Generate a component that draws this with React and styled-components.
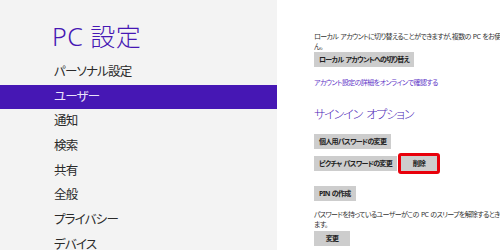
import React from "react";
import styled, { createGlobalStyle } from "styled-components";

const navItems = [
  "パーソナル設定",
  "ユーザー",
  "通知",
  "検索",
  "共有",
  "全般",
  "プライバシー",
  "デバイス",
];

const App = () => {
  return (
    <>
      <GlobalStyle />
      <Window>
        <Sidebar>
          <Title>PC 設定</Title>
          <Nav>
            {navItems.map((item, index) => (
              <NavItem key={index} active={index === 1}>
                {item}
              </NavItem>
            ))}
          </Nav>
        </Sidebar>

        <Content>
          <Para>
            ローカル アカウントに切り替えることができますが、複数の PC をお使いの場合は設定が同期されませ
            <br />
            ん。
          </Para>
          <Button>ローカル アカウントへの切り替え</Button>
          <Link href="#">アカウント設定の詳細をオンラインで確認する</Link>

          <Heading>サインイン オプション</Heading>
          <Button gap={11}>個人用パスワードの変更</Button>
          <Row>
            <Button gap={0}>ピクチャ パスワードの変更</Button>
            <Marked>
              <Button gap={0} wide>削除</Button>
            </Marked>
          </Row>
          <Button gap={12}>PIN の作成</Button>

          <Para gap={9}>
            パスワードを持っているユーザーがこの PC のスリープを解除するときは、パスワードの入力が必要になり
            <br />
            ます。
          </Para>
          <Button gap={2} wide>変更</Button>
        </Content>
      </Window>
    </>
  );
};

export default App;

const GlobalStyle = createGlobalStyle`
  html, body {
    margin: 0;
    padding: 0;
    background: #fff;
  }
  body {
    font-family: "Noto Sans", "Noto Sans CJK JP", sans-serif;
    font-feature-settings: "palt";
  }
`;

const Window = styled.div`
  display: flex;
  width: 500px;
  height: 250px;
  overflow: hidden;
`;

const Sidebar = styled.div`
  width: 277px;
  flex-shrink: 0;
  background: #f3f3f3;
  padding-top: 20px;
  box-sizing: border-box;
`;

const Title = styled.h1`
  margin: 0 0 0 52px;
  height: 40px;
  font-family: "Noto Sans", "Noto Sans CJK JP", sans-serif;
  font-weight: 300;
  font-size: 25px;
  line-height: 32px;
  color: #4617b4;
  letter-spacing: 0.5px;
`;

const Nav = styled.ul`
  list-style: none;
  margin: 0;
  padding: 0;
`;

const NavItem = styled.li`
  height: 24.7px;
  line-height: 24.7px;
  padding-left: 54px;
  font-size: 12.5px;
  letter-spacing: -0.8px;
  color: ${({ active }) => (active ? "#ebe4fa" : "#2a2a2a")};
  background: ${({ active }) => (active ? "#4617b4" : "transparent")};
  white-space: nowrap;
`;

const Content = styled.div`
  flex: 1;
  min-width: 0;
  overflow: hidden;
  padding: 32px 0 0 37px;
  display: flex;
  flex-direction: column;
  align-items: flex-start;
`;

const Para = styled.p`
  margin: ${({ gap }) => gap || 0}px 0 0;
  font-size: 7px;
  letter-spacing: -0.65px;
  word-spacing: 1px;
  line-height: 9.5px;
  color: #333;
  white-space: nowrap;
`;

const Button = styled.button`
  margin-top: ${({ gap }) => (gap === undefined ? 1 : gap)}px;
  height: 15px;
  min-width: ${({ wide }) => (wide ? "36px" : "0")};
  padding: 0 5px;
  border: none;
  background: #cdcdcd;
  font-family: "Noto Sans", "Noto Sans CJK JP", sans-serif;
  font-feature-settings: "palt";
  font-size: 7px;
  font-weight: 700;
  letter-spacing: -0.7px;
  word-spacing: 1px;
  line-height: 15px;
  color: #222;
  white-space: nowrap;
`;

const Link = styled.a`
  margin-top: 11px;
  font-size: 7px;
  letter-spacing: -0.6px;
  line-height: 10px;
  color: #6338c8;
  text-decoration: none;
  white-space: nowrap;
`;

const Heading = styled.h2`
  margin: 19px 0 0;
  font-size: 12px;
  font-weight: 300;
  letter-spacing: -1.1px;
  word-spacing: 2px;
  line-height: 16px;
  color: #4a1db6;
  white-space: nowrap;
`;

const Row = styled.div`
  display: flex;
  align-items: center;
  gap: 1px;
  margin-top: 4px;
`;

const Marked = styled.div`
  display: flex;
  border: 3px solid #e8000b;
  border-radius: 3px;
`;
